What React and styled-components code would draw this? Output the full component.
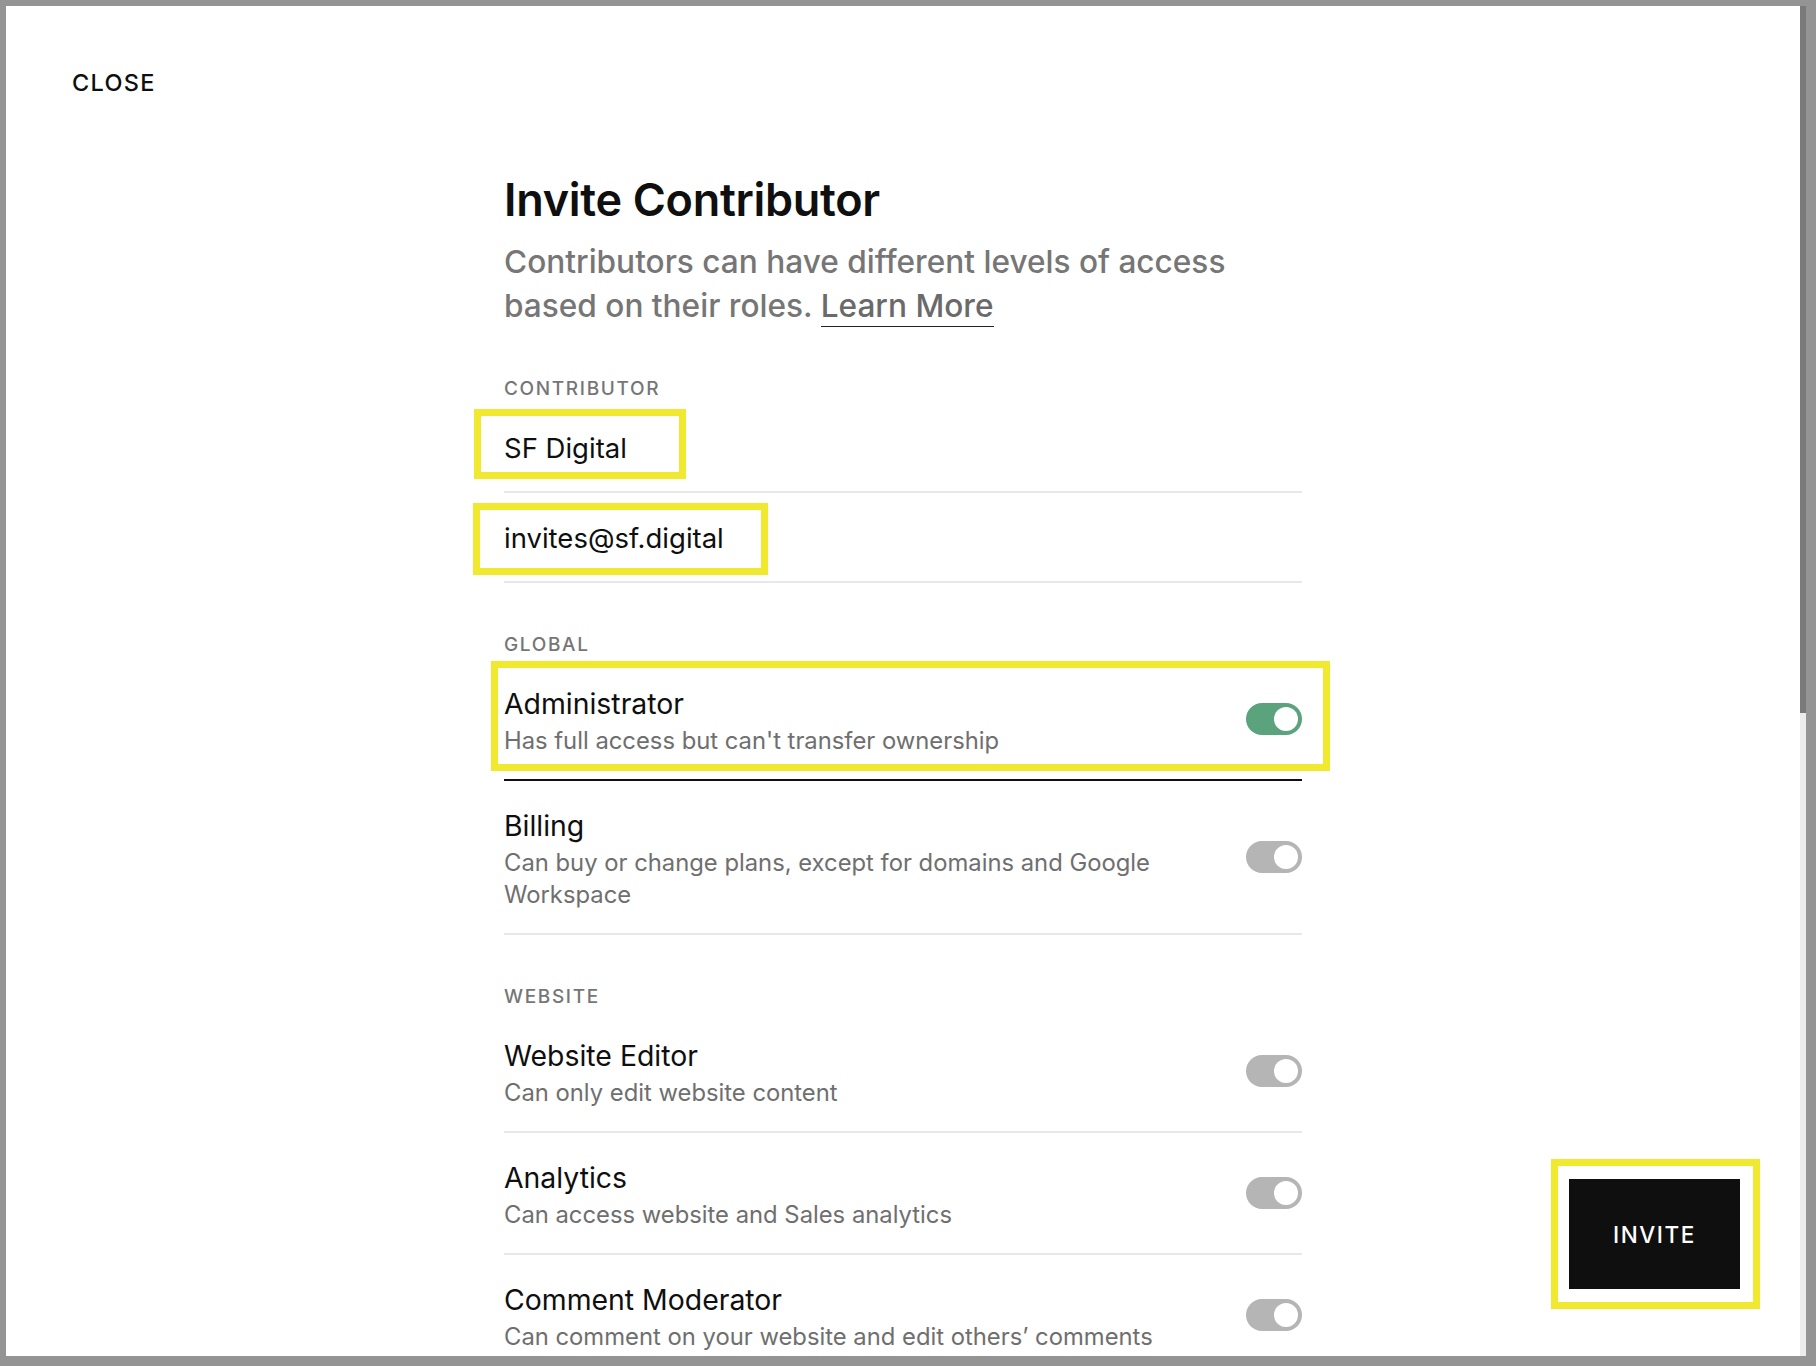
import React from "react";
import styled, { createGlobalStyle } from "styled-components";

const Global = createGlobalStyle`
  html, body { margin: 0; padding: 0; height: 1366px; overflow: hidden; background: #949494; }
  * { box-sizing: border-box; }
  body { font-family: Inter, "Noto Sans", "Liberation Sans", sans-serif; -webkit-font-smoothing: antialiased; }
`;

const Frame = styled.div`
  height: 1366px;
  padding: 6px 10px 10px 6px;
  display: flex;
  background: #949494;
`;
const Modal = styled.section`
  position: relative;
  flex: 1;
  min-width: 0;
  background: #fff;
  overflow: hidden;
`;
const Scrollbar = styled.div`
  width: 6px;
  flex: none;
  background: #ececec;
`;
const Thumb = styled.div`
  height: 707px;
  background: #7a7a7a;
`;
const TopBar = styled.header`
  height: 152px;
  padding: 65px 0 0 66px;
`;
const CloseButton = styled.button`
  display: block;
  padding: 0;
  border: 0;
  background: none;
  font: 500 23.5px/24px Inter, sans-serif;
  letter-spacing: 1.3px;
  color: #0f0f0f;
`;
const Column = styled.main`
  width: 798px;
  margin-left: 498px;
`;
const Title = styled.h1`
  margin: 16px 0 0;
  font-size: 45px;
  line-height: 52px;
  font-weight: 600;
  letter-spacing: -0.3px;
  color: #0f0f0f;
`;
const Intro = styled.p`
  margin: 14px 0 51px;
  font-size: 31.6px;
  line-height: 44px;
  font-weight: 500;
  color: #767676;
`;
const IntroLine = styled.span`
  display: block;
`;
const LearnMore = styled.a`
  color: #6a6a6a;
  border-bottom: 1.5px solid #222;
  padding-bottom: 1px;
`;
const SectionLabel = styled.h2`
  margin: ${(p) => (p.$spaced ? "52px" : "0")} 0 4px;
  font-size: 19px;
  line-height: 20px;
  font-weight: 500;
  letter-spacing: 1.65px;
  color: #767676;
`;
const Field = styled.div`
  position: relative;
  height: 90px;
  padding-top: 2px;
  display: flex;
  align-items: center;
  border-bottom: 2px solid #e8e8e8;
  font-size: 27.5px;
  line-height: 32px;
  color: #0f0f0f;
`;
const Marker = styled.div`
  position: absolute;
  top: ${(p) => p.$top}px;
  left: ${(p) => p.$left}px;
  width: ${(p) => p.$width}px;
  height: ${(p) => p.$height}px;
  border: 7px solid #f0e92f;
  pointer-events: none;
`;
const Row = styled.div`
  position: relative;
  display: flex;
  align-items: center;
  justify-content: space-between;
  gap: 48px;
  padding: 29px 0 22px;
  border-bottom: 2px solid ${(p) => (p.$active ? "#0f0f0f" : "#e8e8e8")};
`;
const RowText = styled.div`
  flex: 1;
  min-width: 0;
`;
const RowTitle = styled.div`
  font-size: 28.4px;
  line-height: 32px;
  color: #0f0f0f;
  margin-bottom: 5px;
`;
const RowDescription = styled.div`
  font-size: 23.8px;
  line-height: 32px;
  color: #6f6f6f;
`;
const Toggle = styled.span`
  flex: none;
  width: 56px;
  height: 32px;
  margin-bottom: 8px;
  padding: 4px;
  border-radius: 16px;
  display: flex;
  justify-content: flex-end;
  background: ${(p) => (p.$on ? "#5aa37c" : "#b5b5b5")};
`;
const Knob = styled.span`
  width: 24px;
  height: 24px;
  border-radius: 50%;
  background: #fff;
`;
const InviteArea = styled.div`
  position: absolute;
  right: 40px;
  bottom: 47px;
  width: 209px;
  height: 150px;
  padding: 13px 13px 13px 11px;
  border: 7px solid #f0e92f;
  background: #fff;
`;
const InviteButton = styled.button`
  display: block;
  width: 100%;
  height: 110px;
  padding: 2px 0 0;
  border: 0;
  background: #0f0f0f;
  color: #fff;
  font: 500 22.5px/24px Inter, sans-serif;
  letter-spacing: 1.6px;
`;

const Permission = ({ title, children, on, active, marker }) => (
  <Row $active={active}>
    <RowText>
      <RowTitle>{title}</RowTitle>
      <RowDescription>{children}</RowDescription>
    </RowText>
    <Toggle $on={on}><Knob /></Toggle>
    {marker}
  </Row>
);

export default function App() {
  return (
    <>
      <Global />
      <Frame>
        <Modal>
          <TopBar><CloseButton>CLOSE</CloseButton></TopBar>
          <Column>
            <Title>Invite Contributor</Title>
            <Intro>
              <IntroLine>Contributors can have different levels of access</IntroLine>
              <IntroLine>based on their roles. <LearnMore>Learn More</LearnMore></IntroLine>
            </Intro>
            <SectionLabel>CONTRIBUTOR</SectionLabel>
            <Field>
              SF Digital
              <Marker $top={6} $left={-30} $width={212} $height={70} />
            </Field>
            <Field>
              invites@sf.digital
              <Marker $top={10} $left={-31} $width={295} $height={72} />
            </Field>
            <SectionLabel $spaced>GLOBAL</SectionLabel>
            <Permission
              title="Administrator"
              on
              active
              marker={<Marker $top={2} $left={-13} $width={839} $height={110} />}
            >
              Has full access but can't transfer ownership
            </Permission>
            <Permission title="Billing">
              Can buy or change plans, except for domains and Google Workspace
            </Permission>
            <SectionLabel $spaced>WEBSITE</SectionLabel>
            <Permission title="Website Editor">Can only edit website content</Permission>
            <Permission title="Analytics">Can access website and Sales analytics</Permission>
            <Permission title="Comment Moderator">
              Can comment on your website and edit others’ comments
            </Permission>
          </Column>
          <InviteArea><InviteButton>INVITE</InviteButton></InviteArea>
        </Modal>
        <Scrollbar><Thumb /></Scrollbar>
      </Frame>
    </>
  );
}
